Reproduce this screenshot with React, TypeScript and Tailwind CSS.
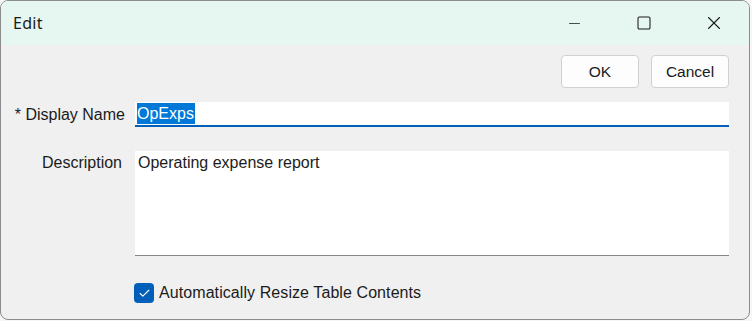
import { Check, Minus, Square, X } from 'lucide-react'

// Windows-style "Edit" dialog

const FONT = { fontFamily: '"Liberation Sans", Arial, sans-serif' }

export default function App() {
  return (
    <div className="h-[321px] w-[752px] overflow-hidden bg-[#f7f7f7]" style={FONT}>
      <div className="flex h-[320px] w-[750px] flex-col overflow-hidden rounded-[8px] border border-[#8c8c8c] bg-[#f0f0f0] text-[#1b1b1b]">
        {/* ── Title bar ─────────────────────────────────────────── */}
        <div className="flex h-[44px] shrink-0 items-center bg-[#e6f7f1] pl-[12px]">
          <span className="text-[16px] tracking-[0.3px]" style={{ fontFamily: '"Noto Sans", sans-serif' }}>
            Edit
          </span>
          <div className="ml-auto flex h-full items-center">
            <button type="button" className="flex h-full w-[70px] items-center justify-center">
              <Minus className="h-[17px] w-[17px]" strokeWidth={1.1} />
            </button>
            <button type="button" className="flex h-full w-[70px] items-center justify-center">
              <Square className="h-[16px] w-[16px]" strokeWidth={1.6} />
            </button>
            <button type="button" className="flex h-full w-[70px] items-center justify-center">
              <X className="h-[22px] w-[22px]" strokeWidth={1.2} />
            </button>
          </div>
        </div>

        {/* ── Body ──────────────────────────────────────────────── */}
        <div className="flex flex-col pr-[20px] text-[16px]">
          <div className="mt-[10px] flex justify-end gap-[12px]">
            <button
              type="button"
              className="h-[33px] w-[78px] rounded-[4px] border border-[#d1d1d1] bg-[#fdfdfd] text-[15.5px]"
            >
              OK
            </button>
            <button
              type="button"
              className="h-[33px] w-[78px] rounded-[4px] border border-[#d1d1d1] bg-[#fdfdfd] text-[15.5px]"
            >
              Cancel
            </button>
          </div>

          <div className="mt-[14px] flex items-center">
            <label className="w-[124px] shrink-0 text-right">* Display Name</label>
            <div className="ml-[10px] flex h-[25px] flex-1 items-center border-b-2 border-[#005fb8] bg-white pl-[2px]">
              <span className="bg-[#0078d7] pr-[1px] leading-[21px] text-white">OpExps</span>
            </div>
          </div>

          <div className="mt-[24px] flex items-start">
            <label className="w-[121px] shrink-0 text-right">Description</label>
            <div className="ml-[13px] h-[105px] flex-1 border-b border-[#868686] bg-white px-[3px]">
              Operating expense report
            </div>
          </div>

          <div className="ml-[133px] mt-[25px] flex items-center gap-[5px]">
            <span className="flex h-[20px] w-[20px] items-center justify-center rounded-[4px] bg-[#005fb8]">
              <Check className="h-[13px] w-[13px] text-white" strokeWidth={2} />
            </span>
            <span className="tracking-[0.08px]">Automatically Resize Table Contents</span>
          </div>
        </div>
      </div>
    </div>
  )
}
